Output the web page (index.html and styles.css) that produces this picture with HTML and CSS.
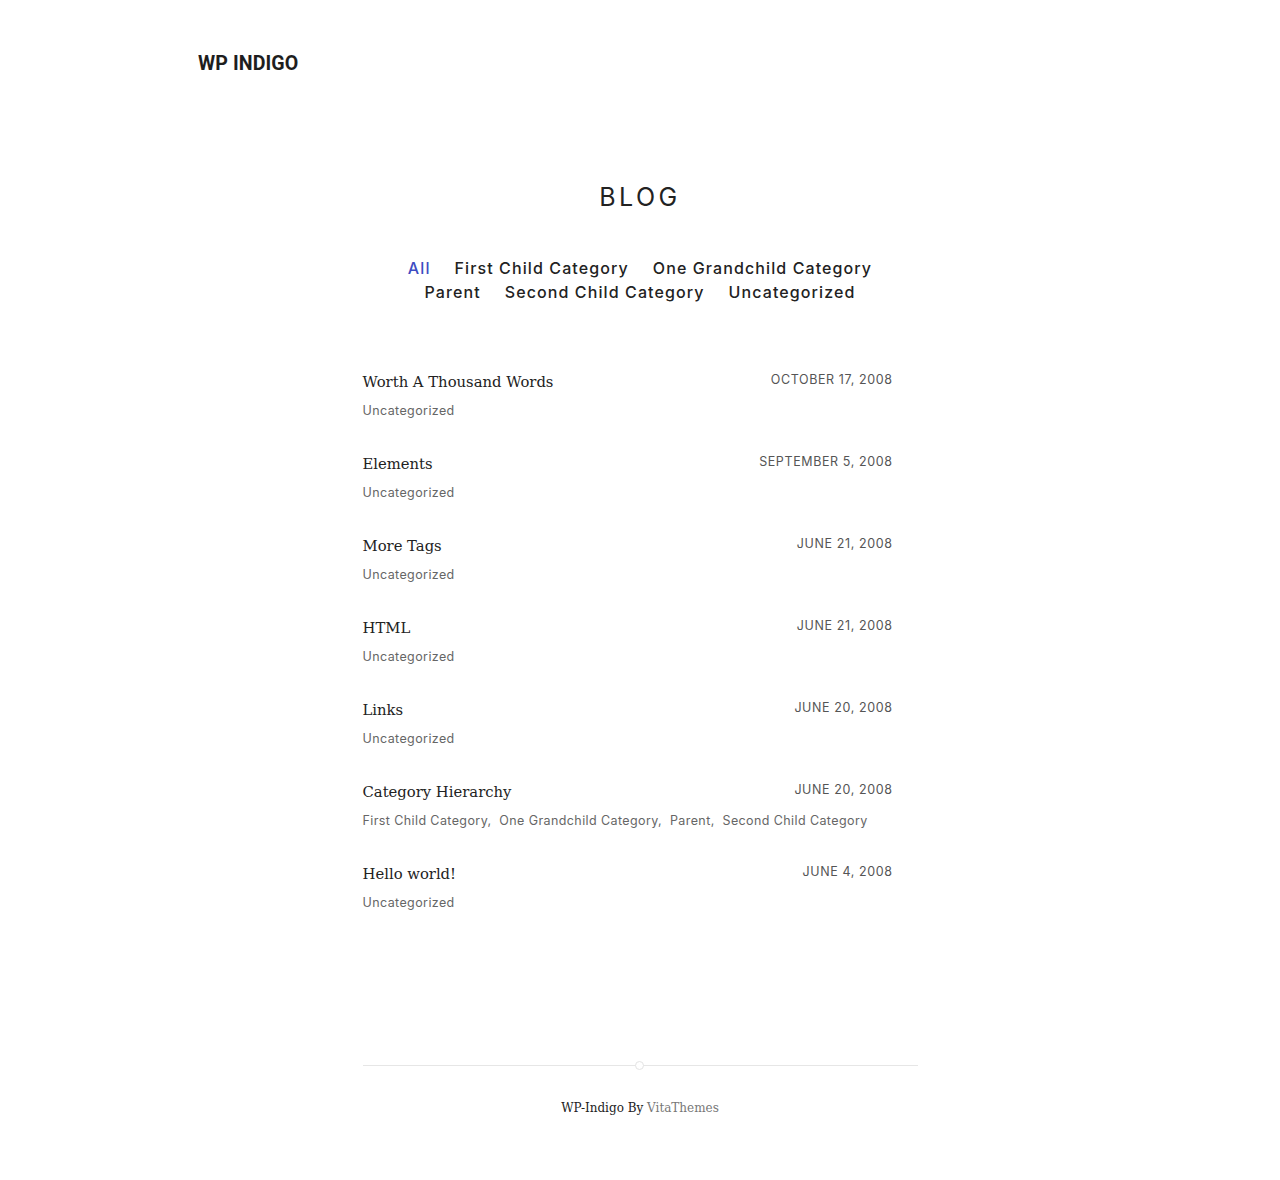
FILE: index.html
```html
<!DOCTYPE html>
<html lang="en">
<head>
<meta charset="utf-8">
<title>Blog – WP Indigo</title>
<link rel="stylesheet" href="styles.css">
</head>
<body>
<header class="site-header">
  <a class="logo" href="#">WP INDIGO</a>
</header>
<main class="content">
  <h1 class="page-title">BLOG</h1>
  <nav class="filters">
    <div class="filter-row">
      <a class="filter active" href="#">All</a>
      <a class="filter" href="#">First Child Category</a>
      <a class="filter" href="#">One Grandchild Category</a>
    </div>
    <div class="filter-row">
      <a class="filter" href="#">Parent</a>
      <a class="filter" href="#">Second Child Category</a>
      <a class="filter" href="#">Uncategorized</a>
    </div>
  </nav>
  <ul class="posts">
    <li class="post">
      <div class="post-head"><a class="post-title" href="#">Worth A Thousand Words</a><span class="post-date">October 17, 2008</span></div>
      <div class="post-cats"><a href="#">Uncategorized</a></div>
    </li>
    <li class="post">
      <div class="post-head"><a class="post-title" href="#">Elements</a><span class="post-date">September 5, 2008</span></div>
      <div class="post-cats"><a href="#">Uncategorized</a></div>
    </li>
    <li class="post">
      <div class="post-head"><a class="post-title" href="#">More Tags</a><span class="post-date">June 21, 2008</span></div>
      <div class="post-cats"><a href="#">Uncategorized</a></div>
    </li>
    <li class="post">
      <div class="post-head"><a class="post-title" href="#">HTML</a><span class="post-date">June 21, 2008</span></div>
      <div class="post-cats"><a href="#">Uncategorized</a></div>
    </li>
    <li class="post">
      <div class="post-head"><a class="post-title" href="#">Links</a><span class="post-date">June 20, 2008</span></div>
      <div class="post-cats"><a href="#">Uncategorized</a></div>
    </li>
    <li class="post">
      <div class="post-head"><a class="post-title" href="#">Category Hierarchy</a><span class="post-date">June 20, 2008</span></div>
      <div class="post-cats"><a href="#">First Child Category</a>,&nbsp; <a href="#">One Grandchild Category</a>,&nbsp; <a href="#">Parent</a>,&nbsp; <a href="#">Second Child Category</a></div>
    </li>
    <li class="post">
      <div class="post-head"><a class="post-title" href="#">Hello world!</a><span class="post-date">June 4, 2008</span></div>
      <div class="post-cats"><a href="#">Uncategorized</a></div>
    </li>
  </ul>
</main>
<footer class="site-footer">
  <div class="divider"><span class="dot"></span></div>
  <p class="credit">WP-Indigo By <a href="#">VitaThemes</a></p>
</footer>
</body>
</html>
```
FILE: styles.css
```css
* { box-sizing: border-box; }
html, body { margin: 0; padding: 0; background: #fff; }
body {
  font-family: "Open Sans", "Liberation Sans", sans-serif;
  color: #222;
}
a { text-decoration: none; color: inherit; }

.site-header {
  width: 884px;
  margin: 0 auto;
  padding-top: 50px;
  height: 150px;
}
.logo {
  font-family: Roboto, "Liberation Sans", sans-serif;
  font-weight: 700;
  font-size: 20px;
  line-height: 26px;
  color: #1e1e1e;
  letter-spacing: 0.1px;
  display: inline-block;
  transform: scaleX(0.98);
  transform-origin: left center;
}

.content {
  width: 555px;
  margin: 0 auto;
}
.page-title {
  margin: 0;
  padding-top: 31px;
  text-align: center;
  font-family: Inter, "Liberation Sans", sans-serif;
  font-weight: 400;
  font-size: 25px;
  line-height: 32px;
  letter-spacing: 3.5px;
  color: #222;
}
.filters {
  margin-top: 43px;
  display: flex;
  flex-direction: column;
  align-items: center;
  font-family: Inter, "Liberation Sans", sans-serif;
  font-size: 16px;
  line-height: 24px;
  letter-spacing: 1.1px;
  font-weight: 500;
}
.filter-row {
  display: flex;
  gap: 24px;
  justify-content: center;
  white-space: nowrap;
}
.filter { color: #222; }
.filter.active { color: #3e4cc2; }

.posts {
  list-style: none;
  margin: 66px 0 0;
  padding: 0 25px 0 0;
}
.post {
  height: 82px;
}
.post-head {
  display: flex;
  justify-content: space-between;
  align-items: flex-start;
}
.post-title {
  font-family: "DejaVu Serif", "Liberation Serif", serif;
  font-size: 14.8px;
  line-height: 24px;
  color: #222;
  letter-spacing: 0;
}
.post-date {
  font-family: Inter, "Liberation Sans", sans-serif;
  font-size: 12.5px;
  line-height: 20px;
  letter-spacing: 0.6px;
  text-transform: uppercase;
  color: #555;
}
.post-cats {
  margin-top: 8px;
  font-family: Inter, "Liberation Sans", sans-serif;
  font-size: 12.5px;
  line-height: 18px;
  letter-spacing: 0.4px;
  color: #666;
}

.site-footer {
  width: 555px;
  margin: 121px auto 0;
  padding-bottom: 60px;
}
.divider {
  position: relative;
  height: 1px;
  background: #e6e6e6;
}
.dot {
  position: absolute;
  left: 50%;
  top: -4px;
  width: 9px;
  height: 9px;
  margin-left: -5px;
  border: 1px solid #e3e3e3;
  border-radius: 50%;
  background: #fff;
}
.credit {
  margin: 32px 0 0;
  text-align: center;
  font-family: "DejaVu Serif", "Liberation Serif", serif;
  font-size: 12px;
  line-height: 20px;
  color: #222;
}
.credit a { color: #777; }
```
